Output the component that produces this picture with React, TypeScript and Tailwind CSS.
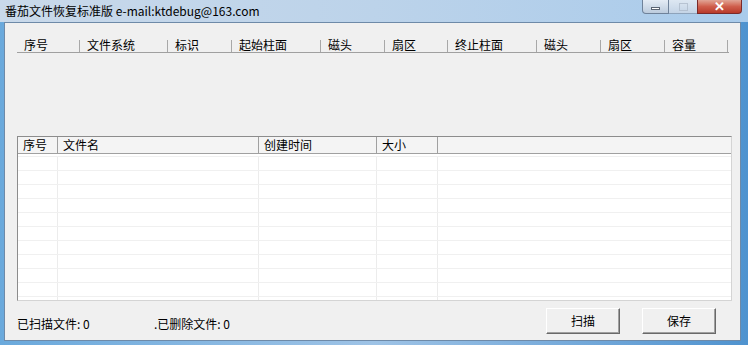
const topCols = [
  { label: '序号', w: 63 },
  { label: '文件系统', w: 88 },
  { label: '标识', w: 64 },
  { label: '起始柱面', w: 89 },
  { label: '磁头', w: 64 },
  { label: '扇区', w: 63 },
  { label: '终止柱面', w: 89 },
  { label: '磁头', w: 64 },
  { label: '扇区', w: 64 },
  { label: '容量', w: 63 },
];

const fileCols = [
  { label: '序号', w: 40 },
  { label: '文件名', w: 201 },
  { label: '创建时间', w: 118 },
  { label: '大小', w: 61 },
];

const rows = Array.from({ length: 11 });

const font = { fontFamily: '"Noto Sans CJK SC", "Liberation Sans", sans-serif' };

function WinButton({ label }: { label: string }) {
  return (
    <button className="flex h-[26px] w-[74px] items-center justify-center border border-t-white border-l-white border-r-[#696969] border-b-[#696969] bg-[#f0f0f0] text-[12px] text-black shadow-[inset_-1px_-1px_0_#a0a0a0]">
      {label}
    </button>
  );
}

export default function App() {
  return (
    <div
      className="relative h-[345px] w-[748px] overflow-hidden bg-gradient-to-r from-[#6aa9dc] via-[#9ec3e6] to-[#4f93cf] text-[12px] text-black"
      style={font}
    >
      {/* Title bar */}
      <div className="flex h-[22px] items-center bg-gradient-to-r from-[#c9d9ea] via-[#bcd3ea] to-[#a9cbeb] pl-[5px] text-[12px] leading-none text-black">
        番茄文件恢复标准版 e-mail:ktdebug@163.com
      </div>

      {/* Caption buttons */}
      <div className="absolute right-[6px] top-0 flex h-[14px]">
        <div className="flex w-[27px] items-center justify-center rounded-bl-[4px] border border-t-0 border-[#6f829a] bg-gradient-to-b from-[#e4ecf5] to-[#bccbdd]">
          <div className="mt-[3px] h-[3px] w-[9px] border border-[#5a6473] bg-white" />
        </div>
        <div className="flex w-[28px] items-center justify-center border-b border-[#8ea3bb] bg-gradient-to-b from-[#dde7f2] to-[#c4d4e6]">
          <div className="h-[8px] w-[9px] border border-[#a9b6c6] opacity-70" />
        </div>
        <div className="flex w-[45px] items-center justify-center rounded-br-[4px] border border-t-0 border-[#7a2a2a] bg-gradient-to-b from-[#e0a596] via-[#cf5e4c] to-[#b8392a]">
          <span className="text-[13px] font-bold leading-none text-white" style={{ fontFamily: '"Liberation Sans", sans-serif' }}>
            ✕
          </span>
        </div>
      </div>

      {/* Client area */}
      <div className="ml-[4px] flex h-[319px] w-[737px] flex-col border border-[#6e8aa8] bg-[#f0f0f0]">
        {/* Partition list header */}
        <div className="ml-[12px] mt-[13px] flex h-[17px] w-[712px] border-b border-[#a0a0a0]">
          {topCols.map((c, i) => (
            <div key={i} className="relative flex items-end pl-[7px] leading-[15px]" style={{ width: c.w }}>
              {c.label}
              <div className="absolute bottom-0 right-0 h-[12px] w-px bg-[#a8a8a8]" />
            </div>
          ))}
        </div>

        {/* File list */}
        <div className="ml-[12px] mt-[83px] h-[165px] w-[715px] overflow-hidden border border-[#8c8c8c] border-b-[#d4d4d4] border-r-[#d4d4d4] bg-white">
          <div className="flex h-[17px] border-b border-[#a0a0a0] bg-[#f4f4f4]">
            {fileCols.map((c, i) => (
              <div key={i} className="flex items-center border-r border-[#a0a0a0] pl-[5px] leading-none" style={{ width: c.w }}>
                {c.label}
              </div>
            ))}
          </div>
          <div className="pt-[2px]">
            {rows.map((_, i) => (
              <div key={i} className="flex h-[14px] border-t border-[#f0f0f0]">
                {fileCols.map((c, j) => (
                  <div key={j} className="border-r border-[#ececec]" style={{ width: c.w }} />
                ))}
              </div>
            ))}
          </div>
        </div>

        {/* Status / buttons */}
        <div className="ml-[12px] mt-[7px] flex items-start">
          <div className="mt-[7px] w-[137px]">已扫描文件: 0</div>
          <div className="mt-[7px]">.已删除文件: 0</div>
          <div className="ml-auto mr-[24px] flex gap-[22px]">
            <WinButton label="扫描" />
            <WinButton label="保存" />
          </div>
        </div>
      </div>
    </div>
  );
}
